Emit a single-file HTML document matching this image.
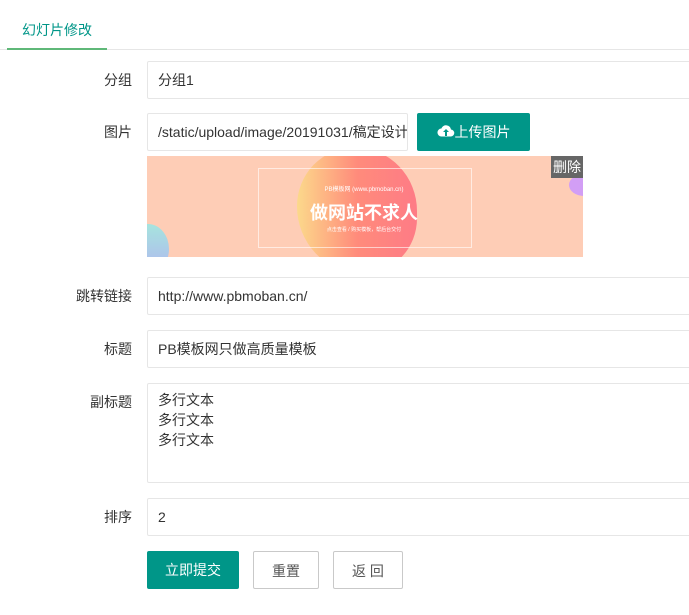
<!DOCTYPE html>
<html><head><meta charset="utf-8"><style>
body{margin:0;background:#fff;font-family:"Liberation Sans","Noto Sans CJK SC",sans-serif;font-size:14px;color:#333;width:689px;height:615px;overflow:hidden;position:relative}
.a{position:absolute}
.tab{left:7px;top:19px;width:100px;height:31px;text-align:center;color:#009688;line-height:22px}
.tl{left:0;top:49px;width:689px;height:1px;background:#e6e6e6}
.tu{left:7px;top:48px;width:100px;height:2px;background:#5FB878}
.lab{width:132px;left:0;text-align:right;line-height:38px}
.in{left:147px;width:560px;height:36px;border:1px solid #e6e6e6;border-radius:2px;line-height:36px;padding-left:10px;box-sizing:content-box;white-space:nowrap;overflow:hidden}
.btn{height:38px;line-height:38px;text-align:center;border-radius:2px;box-sizing:border-box}
</style></head><body>
<div class="a tab">幻灯片修改</div>
<div class="a tl"></div><div class="a tu"></div>

<div class="a lab" style="top:61px">分组</div>
<div class="a in" style="top:61px">分组1</div>

<div class="a lab" style="top:113px">图片</div>
<div class="a in" style="top:113px;width:249px">/static/upload/image/20191031/稿定设计</div>
<div class="a btn" style="left:417px;top:113px;width:113px;background:#009688;color:#fff">
<svg width="18" height="16" viewBox="0 0 18 16" style="vertical-align:-2px"><path d="M4.5 13.5h9a3.5 3.5 0 0 0 .5-7 5 5 0 0 0-9.6-1A4 4 0 0 0 4.5 13.5z" fill="#fff"/><path d="M9 6l-3 3h2v4h2V9h2z" fill="#009688"/></svg>上传图片</div>

<div class="a" style="left:147px;top:156px;width:436px;height:101px;background:#fecdb6;overflow:hidden">
<div class="a" style="left:150px;top:-8px;width:120px;height:125px;border-radius:48% 52% 45% 55%;background:linear-gradient(90deg,#fcd98b,#ff8b7b 50%,#fe7b86);"></div>
<div class="a" style="left:-20px;top:68px;width:42px;height:50px;border-radius:50%;background:linear-gradient(#a6e4de,#b1b6f0)"></div>
<div class="a" style="left:422px;top:18px;width:30px;height:22px;border-radius:50%;background:#d29ef5"></div>
<div class="a" style="left:111px;top:12px;width:212px;height:78px;border:1px solid rgba(255,255,255,.6)"></div>
<div class="a" style="left:111px;top:28px;width:212px;text-align:center;color:#fff;font-size:6px">PB模板网 (www.pbmoban.cn)</div>
<div class="a" style="left:111px;top:43px;width:212px;text-align:center;color:#fff;font-size:18px;font-weight:bold">做网站不求人</div>
<div class="a" style="left:111px;top:70px;width:212px;text-align:center;color:#fff;font-size:5px">点击查看 / 购买模板，帮后台交付</div>
<div class="a" style="left:404px;top:0;width:32px;height:22px;background:#666;color:#fff;line-height:22px;text-align:center;font-size:14px">删除</div>
</div>

<div class="a lab" style="top:277px">跳转链接</div>
<div class="a in" style="top:277px">http://www.pbmoban.cn/</div>
<div class="a lab" style="top:330px">标题</div>
<div class="a in" style="top:330px">PB模板网只做高质量模板</div>
<div class="a lab" style="top:383px">副标题</div>
<div class="a in" style="top:383px;line-height:20px;padding-top:6px;height:92px">多行文本<br>多行文本<br>多行文本</div>
<div class="a lab" style="top:498px">排序</div>
<div class="a in" style="top:498px">2</div>

<div class="a btn" style="left:147px;top:551px;width:92px;background:#009688;color:#fff">立即提交</div>
<div class="a btn" style="left:253px;top:551px;width:66px;border:1px solid #c9c9c9;color:#555">重置</div>
<div class="a btn" style="left:333px;top:551px;width:70px;border:1px solid #c9c9c9;color:#555">返 回</div>
</body></html>
